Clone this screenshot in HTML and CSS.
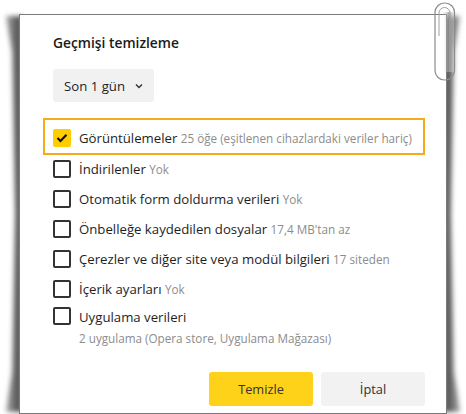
FILE: index.html
```html
<!DOCTYPE html>
<html lang="tr">
<head>
<meta charset="utf-8">
<title>Geçmişi temizleme</title>
<link rel="stylesheet" href="styles.css">
</head>
<body>
<div class="stage">
  <div class="curl curl-left"><div class="curl-shape"></div></div>
  <div class="curl curl-right"><div class="curl-shape"></div></div>
  <div class="sheet">
    <h1 class="title">Geçmişi temizleme</h1>
    <div class="select">
      <span>Son 1 gün</span>
      <svg class="chev" width="8" height="6" viewBox="0 0 8 6"><path d="M1 1.5 L4 4.5 L7 1.5" fill="none" stroke="#333" stroke-width="1.4"/></svg>
    </div>
    <ul class="list">
      <li class="row row-focus">
        <span class="box box-on"><svg width="12" height="10" viewBox="0 0 12 10"><path d="M1.5 5 L4.5 8 L10.5 1.8" fill="none" stroke="#111" stroke-width="2.2"/></svg></span>
        <span class="label">Görüntülemeler <span class="note">25 öğe (eşitlenen cihazlardaki veriler hariç)</span></span>
      </li>
      <li class="row"><span class="box"></span><span class="label">İndirilenler <span class="note">Yok</span></span></li>
      <li class="row"><span class="box"></span><span class="label">Otomatik form doldurma verileri <span class="note">Yok</span></span></li>
      <li class="row"><span class="box"></span><span class="label">Önbelleğe kaydedilen dosyalar <span class="note">17,4 MB'tan az</span></span></li>
      <li class="row"><span class="box"></span><span class="label">Çerezler ve diğer site veya modül bilgileri <span class="note">17 siteden</span></span></li>
      <li class="row"><span class="box"></span><span class="label">İçerik ayarları <span class="note">Yok</span></span></li>
      <li class="row row-multi"><span class="box"></span><span class="label">Uygulama verileri<span class="note note-block">2 uygulama (Opera store, Uygulama Mağazası)</span></span></li>
    </ul>
    <div class="actions">
      <button class="btn btn-primary">Temizle</button>
      <button class="btn">İptal</button>
    </div>
  </div>
  <svg class="clip" width="22" height="80" viewBox="0 0 22 80">
    <defs>
      <linearGradient id="cg" x1="0" y1="0" x2="1" y2="0">
        <stop offset="0" stop-color="#ffffff" stop-opacity="0"/>
        <stop offset="0.5" stop-color="#9a9a9a" stop-opacity="0.7"/>
        <stop offset="1" stop-color="#e0e0e0" stop-opacity="0.4"/>
      </linearGradient>
    </defs>
    <rect x="9" y="10" width="11" height="60" fill="url(#cg)"/>
    <rect x="1" y="1" width="19.5" height="77" rx="9.5" fill="none" stroke="#8c8c8c" stroke-width="1.2"/>
    <path d="M5 34 V11 A5.5 5.5 0 0 1 16 11 V70" fill="none" stroke="#a0a0a0" stroke-width="1"/>
  </svg>
</div>
</body>
</html>
```
FILE: styles.css
```css
* { box-sizing: border-box; }
html, body { margin: 0; padding: 0; background: #fff; }
body { font-family: "Open Sans", "Noto Sans", sans-serif; color: #1e1e1e; }

.stage {
  position: relative;
  width: 466px;
  height: 414px;
  padding: 14px 0 0 19px;
}

.sheet {
  position: relative;
  z-index: 1;
  width: 428px;
  height: 400px;
  background: #fff;
  border: 1px solid #7a7a7a;
  padding: 18px 21px 0 33px;
}

.curl { position: absolute; z-index: 0; filter: blur(2.5px); }
.curl-shape { width: 100%; height: 100%; }
.curl-left { left: 4px; top: 16px; width: 18px; height: 396px; }
.curl-left .curl-shape {
  background: linear-gradient(to left, #3e3e3e, #8e8e8e 70%, #d0d0d0);
  clip-path: polygon(10% 0%, 100% 0%, 100% 100%, 10% 100%, 45% 90%, 62% 50%, 45% 9%);
}
.curl-right { left: 444px; top: 16px; width: 18px; height: 396px; }
.curl-right .curl-shape {
  background: linear-gradient(to right, #3e3e3e, #8e8e8e 70%, #d0d0d0);
  clip-path: polygon(0% 0%, 90% 0%, 55% 9%, 38% 50%, 55% 90%, 90% 100%, 0% 100%);
}

.clip { position: absolute; left: 434px; top: 2px; z-index: 2; }

.title {
  margin: 0;
  font-size: 13.8px;
  line-height: 20px;
  font-weight: 600;
  color: #1a1a1a;
}

.select {
  margin-top: 16px;
  width: 101px;
  height: 33px;
  background: #f1f1f1;
  border-radius: 3px;
  display: flex;
  align-items: center;
  padding-left: 11px;
  gap: 10px;
  font-size: 13.2px;
}
.chev { margin-top: 1px; }

.list { list-style: none; margin: 16px 0 0 -10px; padding: 0; }

.row {
  display: flex;
  align-items: center;
  height: 30px;
  padding-left: 10px;
  font-size: 13.2px;
}
.row-focus {
  height: 37px;
  border: 2px solid #f6ab1c;
  padding-left: 8px;
  padding-top: 3px;
  margin-bottom: -1px;
}
.row-multi { align-items: flex-start; height: auto; padding-top: 3px; }

.box {
  flex: none;
  width: 18px;
  height: 18px;
  border: 2px solid #333;
  border-radius: 2px;
  margin-right: 8px;
  display: flex;
  align-items: center;
  justify-content: center;
}
.box-on { background: #ffcd00; border-color: #ffcd00; }

.label { line-height: 20px; white-space: nowrap; }
.note { font-size: 11.7px; color: #8c8c8c; }
.note-block { display: block; margin-top: 1px; }

.actions {
  display: flex;
  justify-content: flex-end;
  gap: 8px;
  margin-top: 24px;
}
.btn {
  width: 104px;
  height: 34px;
  border: 0;
  border-radius: 3px;
  background: #f2f2f2;
  font-family: inherit;
  font-size: 12.8px;
  color: #333;
}
.btn-primary { background: #ffd21a; }
```
